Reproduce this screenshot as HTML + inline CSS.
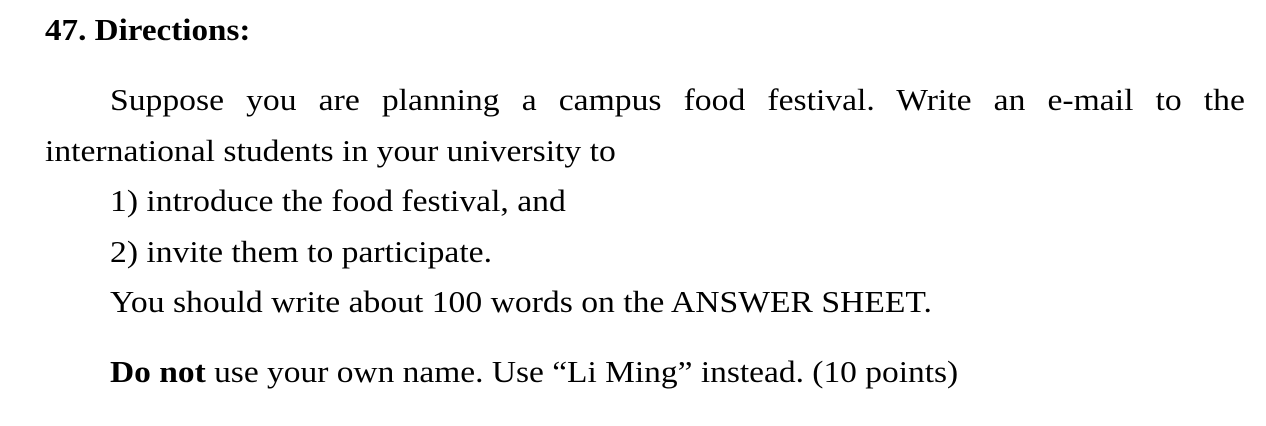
<!DOCTYPE html>
<html><head><meta charset="utf-8"><style>
body{margin:0;width:1266px;height:426px;background:#fff;position:relative;overflow:hidden;font-family:"Liberation Serif",serif;font-size:31px;color:#000}
.l{position:absolute;line-height:32px;white-space:nowrap;transform:scaleX(1.085);transform-origin:0 0}
.j{text-align:justify;text-align-last:justify;white-space:normal}
</style></head><body>
<div class="l" style="left:45px;top:14px;font-weight:bold;transform:scaleX(1.068)">47. Directions:</div>
<div class="l j" style="left:110px;top:84px;width:1046px">Suppose you are planning a campus food festival. Write an e-mail to the</div>
<div class="l" style="left:45px;top:135px">international students in your university to</div>
<div class="l" style="left:110px;top:185px">1) introduce the food festival, and</div>
<div class="l" style="left:110px;top:236px">2) invite them to participate.</div>
<div class="l" style="left:110px;top:286px">You should write about 100 words on the ANSWER SHEET.</div>
<div class="l" style="left:110px;top:356px;transform:scaleX(1.079)"><b>Do not</b> use your own name. Use “Li Ming” instead. (10 points)</div>
</body></html>
